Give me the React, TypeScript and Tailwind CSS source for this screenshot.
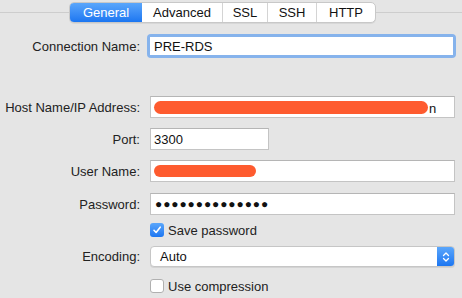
import React from "react";

const font = { fontFamily: '"Liberation Sans", Arial, sans-serif' };

function Label({ children }: { children: React.ReactNode }) {
  return (
    <div className="w-[140px] shrink-0 text-right text-[13px] leading-none text-[#222]">
      {children}
    </div>
  );
}

function Field({ w, children }: { w: string; children?: React.ReactNode }) {
  return (
    <div
      className={`${w} h-[22px] ml-[10px] bg-white border border-[#c4c4c4] border-t-[#b5b5b5] flex items-center pl-[3px] text-[13px] leading-none text-[#111]`}
    >
      {children}
    </div>
  );
}

export default function App() {
  return (
    <div
      className="w-[462px] h-[298px] bg-[#e5e5e5] overflow-hidden flex flex-col"
      style={font}
    >
      {/* tab bar */}
      <div className="flex items-center h-[24px] pt-[1px]">
        <div className="w-[69px] h-px bg-[#cdcdcd]" />
        <div className="flex h-[21px] rounded-[5px] border border-[#c8c8c8] bg-white overflow-hidden text-[13px] leading-none shadow-[0_1px_0_rgba(0,0,0,0.06)]">
          <div className="w-[72px] flex items-center justify-center text-white bg-gradient-to-b from-[#5aa6fb] to-[#1b76f1]">
            General
          </div>
          <div className="w-[81px] flex items-center justify-center text-[#111] border-r border-[#d4d4d4]">
            Advanced
          </div>
          <div className="w-[45px] flex items-center justify-center text-[#111] border-r border-[#d4d4d4]">
            SSL
          </div>
          <div className="w-[49px] flex items-center justify-center text-[#111] border-r border-[#d4d4d4]">
            SSH
          </div>
          <div className="w-[58px] flex items-center justify-center text-[#111]">
            HTTP
          </div>
        </div>
        <div className="flex-1 h-px bg-[#cdcdcd]" />
      </div>

      {/* Connection name */}
      <div className="flex items-center h-[24px] mt-[10px]">
        <Label>Connection Name:</Label>
        <div className="ml-[7px] rounded-[4px] p-[3px] bg-[#86b3ec]">
          <div className="w-[303px] h-[18px] bg-white flex items-center pl-[4px] text-[13px] leading-none text-[#111]">
            PRE-RDS
          </div>
        </div>
      </div>

      {/* Host */}
      <div className="flex items-center h-[22px] mt-[38px]">
        <Label>Host Name/IP Address:</Label>
        <Field w="w-[305px]">
          <div className="h-[13px] w-[274px] rounded-full bg-[#fe5b2f]" />
          <span className="ml-[1px] mt-[3px]">n</span>
        </Field>
      </div>

      {/* Port */}
      <div className="flex items-center h-[22px] mt-[10px]">
        <Label>Port:</Label>
        <Field w="w-[119px]">3300</Field>
      </div>

      {/* User */}
      <div className="flex items-center h-[22px] mt-[10px]">
        <Label>User Name:</Label>
        <Field w="w-[305px]">
          <div className="h-[12px] w-[102px] rounded-full bg-[#fe5b2f]" />
        </Field>
      </div>

      {/* Password */}
      <div className="flex items-center h-[22px] mt-[11px]">
        <Label>Password:</Label>
        <Field w="w-[305px]">
          <span className="text-[12px] tracking-[0.9px] ml-[1px]">●●●●●●●●●●●●●●</span>
        </Field>
      </div>

      {/* Save password */}
      <div className="flex items-center h-[20px] mt-[5px] ml-[150px]">
        <div className="w-[14px] h-[14px] rounded-[3px] bg-gradient-to-b from-[#5aa6fb] to-[#1b76f1] flex items-center justify-center">
          <svg width="10" height="10" viewBox="0 0 10 10">
            <path d="M2 5.3 L4.1 7.5 L8.2 2.2" fill="none" stroke="white" strokeWidth="1.6" strokeLinecap="round" strokeLinejoin="round" />
          </svg>
        </div>
        <span className="ml-[4px] text-[13px] leading-none text-[#222]">Save password</span>
      </div>

      {/* Encoding */}
      <div className="flex items-center h-[21px] mt-[6px]">
        <Label>Encoding:</Label>
        <div className="ml-[10px] w-[305px] h-[21px] rounded-[4px] bg-white border border-[#c6c6c6] shadow-[0_1px_0_rgba(0,0,0,0.08)] flex items-center text-[13px] leading-none text-[#111] overflow-hidden">
          <span className="flex-1 pl-[9px]">Auto</span>
          <div className="w-[17px] h-full bg-gradient-to-b from-[#5aa6fb] to-[#1b76f1] flex items-center justify-center">
            <svg width="8" height="12" viewBox="0 0 8 12">
              <path d="M1.5 4.5 L4 2 L6.5 4.5 M1.5 7.5 L4 10 L6.5 7.5" fill="none" stroke="white" strokeWidth="1.3" strokeLinecap="round" strokeLinejoin="round" />
            </svg>
          </div>
        </div>
      </div>

      {/* Use compression */}
      <div className="flex items-center h-[20px] mt-[9px] ml-[150px]">
        <div className="w-[14px] h-[14px] rounded-[3px] bg-white border border-[#b0b0b0]" />
        <span className="ml-[4px] text-[13px] leading-none text-[#222]">Use compression</span>
      </div>
    </div>
  );
}
